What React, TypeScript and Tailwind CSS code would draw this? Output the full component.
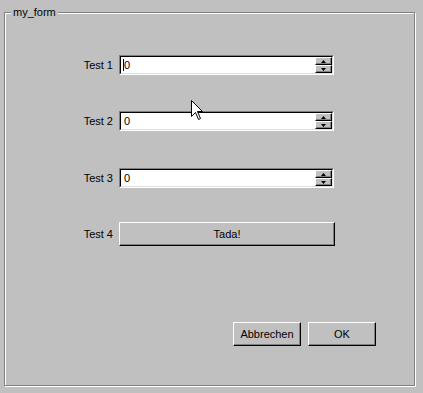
import React from 'react';

const font = { fontFamily: '"Liberation Sans", Arial, sans-serif' };

function Arrow({ down }: { down?: boolean }) {
    return (
        <svg width="5" height="3" viewBox="0 0 5 3" className="block">
            {down ? <path d="M0 0 H5 L2.5 3 Z" fill="#000" /> : <path d="M0 3 H5 L2.5 0 Z" fill="#000" />}
        </svg>
    );
}

function SpinBox({ value, caret }: { value: string; caret?: boolean }) {
    return (
        <div className="w-[215px] h-[20px] border border-t-[#808080] border-l-[#808080] border-b-white border-r-white">
            <div className="h-full border border-t-black border-l-black border-b-[#dfdfdf] border-r-[#dfdfdf] bg-white flex items-stretch">
                <div className="flex-1 flex items-center pl-[2px] text-[11px] text-black relative">
                    {caret && <span className="absolute left-[2px] top-[2px] w-px h-[12px] bg-black" />}
                    <span className="pl-[1px]">{value}</span>
                </div>
                <div className="w-[17px] flex flex-col bg-[#c0c0c0]">
                    <div className="flex-1 flex items-center justify-center border border-t-white border-l-white border-b-black border-r-black shadow-[inset_-1px_-1px_0_#808080]">
                        <Arrow />
                    </div>
                    <div className="flex-1 flex items-center justify-center border border-t-white border-l-white border-b-black border-r-black shadow-[inset_-1px_-1px_0_#808080]">
                        <Arrow down />
                    </div>
                </div>
            </div>
        </div>
    );
}

function Button({ children, className }: { children: React.ReactNode; className?: string }) {
    return (
        <button
            className={`h-[24px] bg-[#c0c0c0] border border-t-white border-l-white border-b-black border-r-black shadow-[inset_-1px_-1px_0_#808080] text-[11px] text-black flex items-center justify-center ${className ?? ''}`}
        >
            {children}
        </button>
    );
}

function Row({ label, children, className }: { label: string; children: React.ReactNode; className?: string }) {
    return (
        <div className={`flex items-center ${className ?? ''}`}>
            <span className="w-[114px] text-right pr-[6px] text-[11px] text-black">{label}</span>
            {children}
        </div>
    );
}

export default function App() {
    return (
        <div className="w-[423px] h-[393px] bg-[#c0c0c0] overflow-hidden relative pt-[12px] pl-[4px]" style={font}>
            <div className="relative w-[411px] h-[374px] border border-[#808080] shadow-[inset_1px_1px_0_#fff,1px_1px_0_#fff]">
                <span className="absolute left-[6px] top-[-8px] px-[2px] bg-[#c0c0c0] text-[11px] leading-[14px] text-black">
                    my_form
                </span>
                <div className="flex flex-col pt-[42px]">
                    <Row label="Test 1" className="h-[20px]">
                        <SpinBox value="0" caret />
                    </Row>
                    <Row label="Test 2" className="h-[20px] mt-[36px]">
                        <SpinBox value="0" />
                    </Row>
                    <Row label="Test 3" className="h-[20px] mt-[37px]">
                        <SpinBox value="0" />
                    </Row>
                    <Row label="Test 4" className="h-[24px] mt-[34px]">
                        <Button className="w-[216px]">Tada!</Button>
                    </Row>
                    <div className="flex justify-end gap-[7px] pr-[38px] mt-[76px]">
                        <Button className="w-[68px]">Abbrechen</Button>
                        <Button className="w-[68px]">OK</Button>
                    </div>
                </div>
            </div>
            <svg className="absolute left-[191px] top-[100px]" width="13" height="21" viewBox="0 0 13 21">
                <path d="M0.5 0.5 V16.5 L4.5 12.5 L7.5 19.5 L9.5 18.5 L6.5 11.5 H11.5 Z" fill="#fff" stroke="#000" strokeWidth="1" />
            </svg>
        </div>
    );
}
